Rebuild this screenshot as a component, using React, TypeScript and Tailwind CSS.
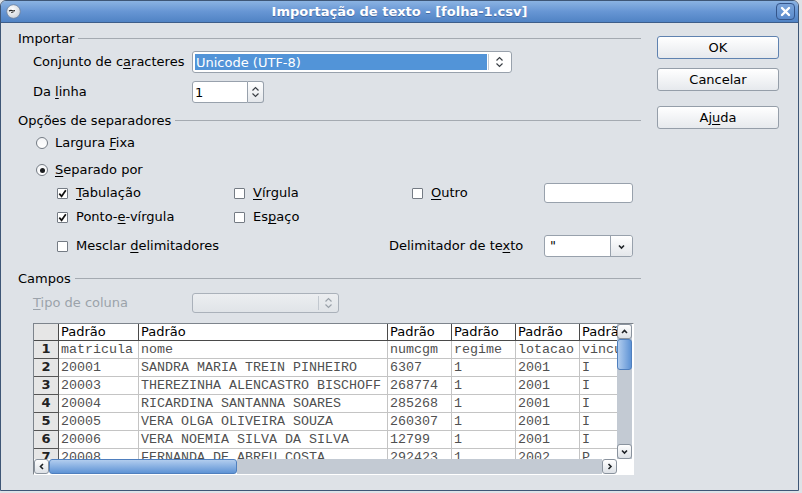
import React from "react";

const U = ({ children }: { children: React.ReactNode }) => (
  <span className="underline underline-offset-[2px] decoration-[1px]">{children}</span>
);

function UpDown({ color = "#3a3f45" }: { color?: string }) {
  return (
    <svg width="9" height="14" viewBox="0 0 9 14">
      <path d="M1.5 5.5 L4.5 2.5 L7.5 5.5" stroke={color} strokeWidth="1.2" fill="none" />
      <path d="M1.5 8.5 L4.5 11.5 L7.5 8.5" stroke={color} strokeWidth="1.2" fill="none" />
    </svg>
  );
}

function Chevron({ dir }: { dir: "up" | "down" | "left" | "right" }) {
  const d =
    dir === "up"
      ? "M2 6 L4.5 3.5 L7 6"
      : dir === "down"
      ? "M2 3.5 L4.5 6 L7 3.5"
      : dir === "left"
      ? "M6 2 L3.5 4.5 L6 7"
      : "M3.5 2 L6 4.5 L3.5 7";
  return (
    <svg width="9" height="9" viewBox="0 0 9 9">
      <path d={d} stroke="#1e2226" strokeWidth="1.6" fill="none" />
    </svg>
  );
}

function Section({ title }: { title: string }) {
  return (
    <div className="flex items-center h-[18px] gap-[4px]">
      <span className="leading-none whitespace-nowrap">{title}</span>
      <div className="flex-1 border-t border-[#a4aab1]" />
    </div>
  );
}

function Check({ checked }: { checked?: boolean }) {
  return (
    <span className="w-[11px] h-[11px] shrink-0 border border-[#747b84] rounded-[1px] bg-white flex items-center justify-center">
      {checked && (
        <svg width="9" height="9" viewBox="0 0 9 9">
          <path d="M1.3 4.6 L3.6 7.3 L7.8 1.2" stroke="#111" strokeWidth="1.7" fill="none" />
        </svg>
      )}
    </span>
  );
}

function Radio({ checked }: { checked?: boolean }) {
  return (
    <span className="w-[12px] h-[12px] shrink-0 rounded-full border border-[#747b84] bg-gradient-to-b from-[#f4f5f7] to-white flex items-center justify-center">
      {checked && <span className="w-[5px] h-[5px] rounded-full bg-[#1b1d20]" />}
    </span>
  );
}

function ScrollBtn({ dir }: { dir: "up" | "down" | "left" | "right" }) {
  return (
    <div className="w-[15px] h-[15px] shrink-0 rounded-[3px] border border-[#8a939e] bg-gradient-to-b from-white to-[#dde1e6] flex items-center justify-center">
      <Chevron dir={dir} />
    </div>
  );
}

const colW = ["w-[80px]", "w-[249px]", "w-[64px]", "w-[64px]", "w-[64px]", "w-[64px]"];

const rows = [
  ["matricula", "nome", "numcgm", "regime", "lotacao", "vinculo"],
  ["20001", "SANDRA MARIA TREIN PINHEIRO", "6307", "1", "2001", "I"],
  ["20003", "THEREZINHA ALENCASTRO BISCHOFF", "268774", "1", "2001", "I"],
  ["20004", "RICARDINA SANTANNA SOARES", "285268", "1", "2001", "I"],
  ["20005", "VERA OLGA OLIVEIRA SOUZA", "260307", "1", "2001", "I"],
  ["20006", "VERA NOEMIA SILVA DA SILVA", "12799", "1", "2001", "I"],
  ["20008", "FERNANDA DE ABREU COSTA", "292423", "1", "2002", "P"],
];

function Table() {
  return (
    <div className="w-[601px] h-[152px] border border-t-[#7d848c] border-l-[#7d848c] border-r-white border-b-white flex flex-col bg-white">
      <div className="flex h-[135px]">
        <div className="w-[583px] overflow-hidden">
          <div className="flex h-[17px]">
            <div className="w-[25px] shrink-0 bg-[#e6e6e6] border-r border-b border-[#4a4a4a]" />
            {colW.map((w, i) => (
              <div
                key={i}
                className={`${w} shrink-0 border-r border-b border-[#4a4a4a] pl-[2px] leading-[16px] whitespace-nowrap overflow-hidden`}
              >
                Padrão
              </div>
            ))}
          </div>
          {rows.map((r, ri) => (
            <div key={ri} className="flex h-[18px]">
              <div className="w-[25px] shrink-0 bg-[#e6e6e6] border-r border-b border-[#555] font-bold text-center leading-[16px] text-[#222]">
                {ri + 1}
              </div>
              {r.map((c, ci) => (
                <div
                  key={ci}
                  className={`${colW[ci]} shrink-0 border-r border-b border-[#c4c4c4] pl-[2px] leading-[17px] whitespace-nowrap overflow-hidden font-['Liberation_Mono',monospace] text-[13.33px] text-[#505050]`}
                >
                  {c}
                </div>
              ))}
            </div>
          ))}
        </div>
        <div className="w-[15px] flex flex-col bg-[#c3cad3]">
          <ScrollBtn dir="up" />
          <div className="h-[31px] rounded-[3px] border border-[#4f7fbe] bg-gradient-to-r from-[#b2cdee] to-[#5e93d5]" />
          <div className="flex-1" />
          <ScrollBtn dir="down" />
        </div>
        <div className="w-[1px] bg-white" />
      </div>
      <div className="flex h-[15px]">
        <ScrollBtn dir="left" />
        <div className="w-[188px] rounded-[3px] border border-[#4f7fbe] bg-gradient-to-b from-[#b2cdee] to-[#5e93d5]" />
        <div className="flex-1 bg-[#c3cad3]" />
        <ScrollBtn dir="right" />
        <div className="w-[16px] bg-white" />
      </div>
    </div>
  );
}

function Button({ children, focus }: { children: React.ReactNode; focus?: boolean }) {
  return (
    <div
      className={`h-[23px] w-[122px] rounded-[3px] border ${
        focus ? "border-[#5f82b0]" : "border-[#959ea9]"
      } bg-gradient-to-b from-white to-[#e6e9ed] flex items-center justify-center`}
    >
      {children}
    </div>
  );
}

export default function App() {
  return (
    <div className="w-[802px] h-[493px] bg-[#dee2e7] font-['DejaVu_Sans',sans-serif] text-[13px] text-black">
      <div className="w-[799px] h-[491px] flex flex-col border border-[#3e5676] rounded-t-[6px] overflow-hidden bg-[#dee2e7]">
        {/* title bar */}
        <div className="h-[22px] shrink-0 flex items-center bg-gradient-to-b from-[#8bb3e2] via-[#6796d4] to-[#5083c4] border-b border-[#3d5d8a]">
          <div className="w-[26px] flex items-center pl-[5px]">
            <svg width="15" height="15" viewBox="0 0 15 15">
              <defs>
                <radialGradient id="g" cx="0.4" cy="0.35" r="0.7">
                  <stop offset="0" stopColor="#ffffff" />
                  <stop offset="1" stopColor="#cdd3da" />
                </radialGradient>
              </defs>
              <circle cx="7.5" cy="7.5" r="6.8" fill="url(#g)" stroke="#6f829c" strokeWidth="0.8" />
              <path d="M3 7 Q5 5.8 7 7 L9 6.6" stroke="#222" strokeWidth="1.1" fill="none" />
              <path d="M5 8.6 L7.5 8.2" stroke="#444" strokeWidth="0.9" fill="none" />
            </svg>
          </div>
          <div className="flex-1 text-center text-white font-bold text-[13px] leading-none [text-shadow:0_1px_0_rgba(40,70,120,0.5)]">
            Importação de texto - [folha-1.csv]
          </div>
          <div className="w-[26px] flex items-center justify-end pr-[3px]">
            <div className="w-[19px] h-[17px] rounded-[4px] border border-[#34558a] bg-gradient-to-b from-[#7aa4da] to-[#5a8acb] flex items-center justify-center">
              <svg width="11" height="11" viewBox="0 0 11 11">
                <path d="M2 2 L9 9 M9 2 L2 9" stroke="#fff" strokeWidth="2.4" strokeLinecap="round" />
              </svg>
            </div>
          </div>
        </div>

        {/* body */}
        <div className="flex flex-1">
          <div className="w-[640px] pl-[17px] pt-[6px] flex flex-col">
            <Section title="Importar" />
            <div className="mt-[4px] h-[22px] flex items-center pl-[15px]">
              <div className="w-[159px]">
                Conjunto de c<U>a</U>racteres
              </div>
              <div className="w-[320px] h-[22px] flex rounded-[3px] border border-[#98a1ac] bg-white p-[2px]">
                <div className="flex-1 bg-[#5294d8] text-white flex items-center pl-[1px] leading-none">
                  Unicode (UTF-8)
                </div>
                <div className="w-[21px] flex items-center justify-center border-l border-[#c6ccd3] ml-[1px]">
                  <UpDown />
                </div>
              </div>
            </div>
            <div className="mt-[8px] h-[22px] flex items-center pl-[15px]">
              <div className="w-[159px]">
                Da <U>l</U>inha
              </div>
              <div className="flex h-[22px]">
                <div className="w-[56px] border border-[#98a1ac] rounded-l-[3px] bg-white flex items-center pl-[2px] leading-none">
                  1
                </div>
                <div className="w-[16px] border border-l-0 border-[#98a1ac] rounded-r-[3px] bg-gradient-to-b from-white to-[#e4e7eb] flex items-center justify-center">
                  <UpDown />
                </div>
              </div>
            </div>
            <div className="mt-[8px]">
              <Section title="Opções de separadores" />
            </div>
            <div className="mt-[5px] h-[18px] flex items-center pl-[18px] gap-[7px]">
              <Radio />
              <span>
                Largura <U>F</U>ixa
              </span>
            </div>
            <div className="mt-[9px] h-[18px] flex items-center pl-[18px] gap-[7px]">
              <Radio checked />
              <span>
                <U>S</U>eparado por
              </span>
            </div>
            <div className="mt-[4px] h-[20px] pl-[39px] grid grid-cols-[177px_178px_132px_89px] items-center">
              <div className="flex items-center gap-[8px]">
                <Check checked />
                <span>
                  <U>T</U>abulação
                </span>
              </div>
              <div className="flex items-center gap-[8px]">
                <Check />
                <span>
                  <U>V</U>írgula
                </span>
              </div>
              <div className="flex items-center gap-[8px]">
                <Check />
                <span>
                  <U>O</U>utro
                </span>
              </div>
              <div className="h-[20px] rounded-[3px] border border-[#98a1ac] bg-white" />
            </div>
            <div className="mt-[4px] h-[20px] pl-[39px] grid grid-cols-[177px_178px_132px_89px] items-center">
              <div className="flex items-center gap-[8px]">
                <Check checked />
                <span>
                  Ponto-<U>e</U>-vírgula
                </span>
              </div>
              <div className="flex items-center gap-[8px]">
                <Check />
                <span>
                  Es<U>p</U>aço
                </span>
              </div>
            </div>
            <div className="mt-[8px] h-[22px] pl-[39px] flex items-center">
              <div className="w-[332px] flex items-center gap-[8px]">
                <Check />
                <span>
                  Mesclar <U>d</U>elimitadores
                </span>
              </div>
              <div className="w-[155px]">
                Delimitador de te<U>x</U>to
              </div>
              <div className="w-[89px] h-[22px] flex rounded-[3px] border border-[#98a1ac] bg-white">
                <div className="flex-1 pl-[5px] leading-[20px]">"</div>
                <div className="w-[22px] border-l border-[#98a1ac] bg-gradient-to-b from-white to-[#e4e7eb] rounded-r-[3px] flex items-center justify-center">
                  <Chevron dir="down" />
                </div>
              </div>
            </div>
            <div className="mt-[12px]">
              <Section title="Campos" />
            </div>
            <div className="mt-[6px] h-[20px] flex items-center pl-[15px]">
              <div className="w-[159px] text-[#9ba2aa]">
                <U>T</U>ipo de coluna
              </div>
              <div className="w-[147px] h-[20px] flex rounded-[3px] border border-[#aab1ba] bg-gradient-to-b from-[#eceef1] to-[#e0e4e8]">
                <div className="flex-1" />
                <div className="w-[20px] my-[2px] border-l border-[#c2c8cf] flex items-center justify-center">
                  <UpDown color="#9aa1a9" />
                </div>
              </div>
            </div>
            <div className="mt-[10px] pl-[15px]">
              <Table />
            </div>
          </div>

          <div className="ml-[16px] pt-[13px] flex flex-col">
            <Button focus>OK</Button>
            <div className="mt-[9px]">
              <Button>Cancelar</Button>
            </div>
            <div className="mt-[15px]">
              <Button>
                Aj<U>u</U>da
              </Button>
            </div>
          </div>
        </div>
      </div>
    </div>
  );
}
